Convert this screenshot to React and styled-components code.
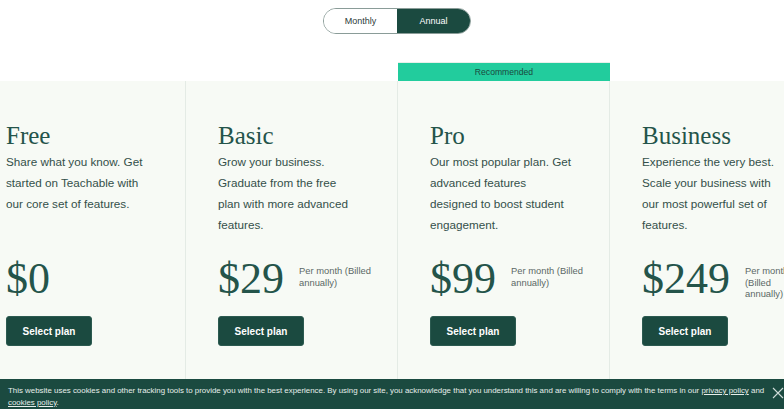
import React, { useState } from 'react';
import styled, { createGlobalStyle } from 'styled-components';

const GlobalStyle = createGlobalStyle`
  html, body {
    margin: 0;
    padding: 0;
    background: #ffffff;
    overflow: hidden;
  }
  body {
    font-family: "Liberation Sans", Arial, sans-serif;
  }
`;

const GREEN = '#1b4a40';

const Page = styled.div`
  width: 784px;
  height: 409px;
  overflow: hidden;
  position: relative;
`;

const ToggleBar = styled.div`
  display: flex;
  justify-content: center;
  padding: 8px 0 0 10px;
  height: 28px;
`;

const Toggle = styled.div`
  display: flex;
  width: 148px;
  height: 26px;
  border-radius: 13px;
  border: 1px solid #8a9c98;
  box-sizing: border-box;
  overflow: hidden;
`;

const ToggleOption = styled.button`
  flex: 1;
  border: none;
  margin: 0;
  padding: 0;
  font-family: "Liberation Sans", Arial, sans-serif;
  font-size: 9px;
  cursor: pointer;
  background: ${(p) => (p.$active ? GREEN : '#ffffff')};
  color: ${(p) => (p.$active ? '#ffffff' : '#2d3b38')};
`;

const Row = styled.div`
  display: flex;
  margin-left: -26px;
  margin-top: 26px;
`;

const Column = styled.div`
  flex: 0 0 212px;
  display: flex;
  flex-direction: column;
`;

const Badge = styled.div`
  height: 19px;
  box-sizing: border-box;
  background: ${(p) => (p.$show ? '#22cc9d' : 'transparent')};
  color: ${GREEN};
  font-size: 8.6px;
  display: flex;
  align-items: center;
  justify-content: center;
  border-top: 1px solid ${(p) => (p.$show ? '#e8f0ea' : 'transparent')};
`;

const Card = styled.div`
  background: #f7faf5;
  border-right: 1px solid #e4ebe5;
  height: 330px;
  box-sizing: border-box;
  padding: 40px 18px 0 32px;
`;

const Title = styled.h2`
  margin: 0;
  font-family: "Liberation Serif", "Times New Roman", serif;
  font-weight: 400;
  font-size: 25px;
  line-height: 30px;
  color: #24544a;
`;

const Description = styled.p`
  margin: 0;
  min-height: 84px;
  font-size: 11.7px;
  line-height: 21px;
  color: #34504a;
  white-space: nowrap;
`;

const PriceRow = styled.div`
  display: flex;
  align-items: flex-start;
  margin-top: 22px;
  gap: 15px;
`;

const Price = styled.div`
  font-family: "Liberation Serif", "Times New Roman", serif;
  font-size: 44px;
  line-height: 44px;
  color: #24544a;
  flex: none;
`;

const PerMonth = styled.div`
  font-size: 9.4px;
  line-height: 11.5px;
  color: #5b6966;
  margin-top: 8px;
  max-width: 82px;
`;

const SelectButton = styled.button`
  margin-top: 15px;
  width: 86px;
  height: 30px;
  border: 1px solid #2c5a50;
  border-radius: 3px;
  background: ${GREEN};
  color: #ffffff;
  font-family: "Liberation Sans", Arial, sans-serif;
  font-size: 10px;
  font-weight: 700;
  cursor: pointer;
`;

const Cookie = styled.div`
  position: fixed;
  left: 0;
  right: 0;
  bottom: 0;
  height: 30px;
  background: ${GREEN};
  color: #e6eeeb;
  font-size: 7.9px;
  line-height: 11.5px;
  box-sizing: border-box;
  padding: 6px 12px 0 8px;
`;

const CookieLink = styled.a`
  color: #e6eeeb;
  text-decoration: underline;
`;

const Close = styled.button`
  position: absolute;
  right: 0px;
  top: 8px;
  background: none;
  border: none;
  padding: 0;
  width: 12px;
  height: 12px;
  cursor: pointer;
`;

const plans = [
  {
    name: 'Free',
    lines: ['Share what you know. Get', 'started on Teachable with', 'our core set of features.'],
    price: '$0',
  },
  {
    name: 'Basic',
    lines: ['Grow your business.', 'Graduate from the free', 'plan with more advanced', 'features.'],
    price: '$29',
    billed: true,
  },
  {
    name: 'Pro',
    lines: ['Our most popular plan. Get', 'advanced features', 'designed to boost student', 'engagement.'],
    price: '$99',
    billed: true,
    recommended: true,
  },
  {
    name: 'Business',
    lines: ['Experience the very best.', 'Scale your business with', 'our most powerful set of', 'features.'],
    price: '$249',
    billed: true,
  },
];

export default function App() {
  const [annual, setAnnual] = useState(true);
  return (
    <Page>
      <GlobalStyle />
      <ToggleBar>
        <Toggle>
          <ToggleOption $active={!annual} onClick={() => setAnnual(false)}>Monthly</ToggleOption>
          <ToggleOption $active={annual} onClick={() => setAnnual(true)}>Annual</ToggleOption>
        </Toggle>
      </ToggleBar>
      <Row>
        {plans.map((plan) => (
          <Column key={plan.name}>
            <Badge $show={plan.recommended}>{plan.recommended ? 'Recommended' : ''}</Badge>
            <Card>
              <Title>{plan.name}</Title>
              <Description>
                {plan.lines.map((l, i) => (
                  <React.Fragment key={i}>
                    {l}
                    {i < plan.lines.length - 1 && <br />}
                  </React.Fragment>
                ))}
              </Description>
              <PriceRow>
                <Price>{plan.price}</Price>
                {plan.billed && <PerMonth>Per month (Billed annually)</PerMonth>}
              </PriceRow>
              <SelectButton>Select plan</SelectButton>
            </Card>
          </Column>
        ))}
      </Row>
      <Cookie>
        This website uses cookies and other tracking tools to provide you with the best experience. By using our site, you acknowledge that you understand this and are willing to comply with the terms in our{' '}
        <CookieLink href="#">privacy policy</CookieLink> and <CookieLink href="#">cookies policy</CookieLink>.
        <Close aria-label="Close">
          <svg width="12" height="12" viewBox="0 0 12 12" fill="none" stroke="#cfdcd8" strokeWidth="1.1">
            <path d="M1 1 L11 11 M11 1 L1 11" />
          </svg>
        </Close>
      </Cookie>
    </Page>
  );
}
